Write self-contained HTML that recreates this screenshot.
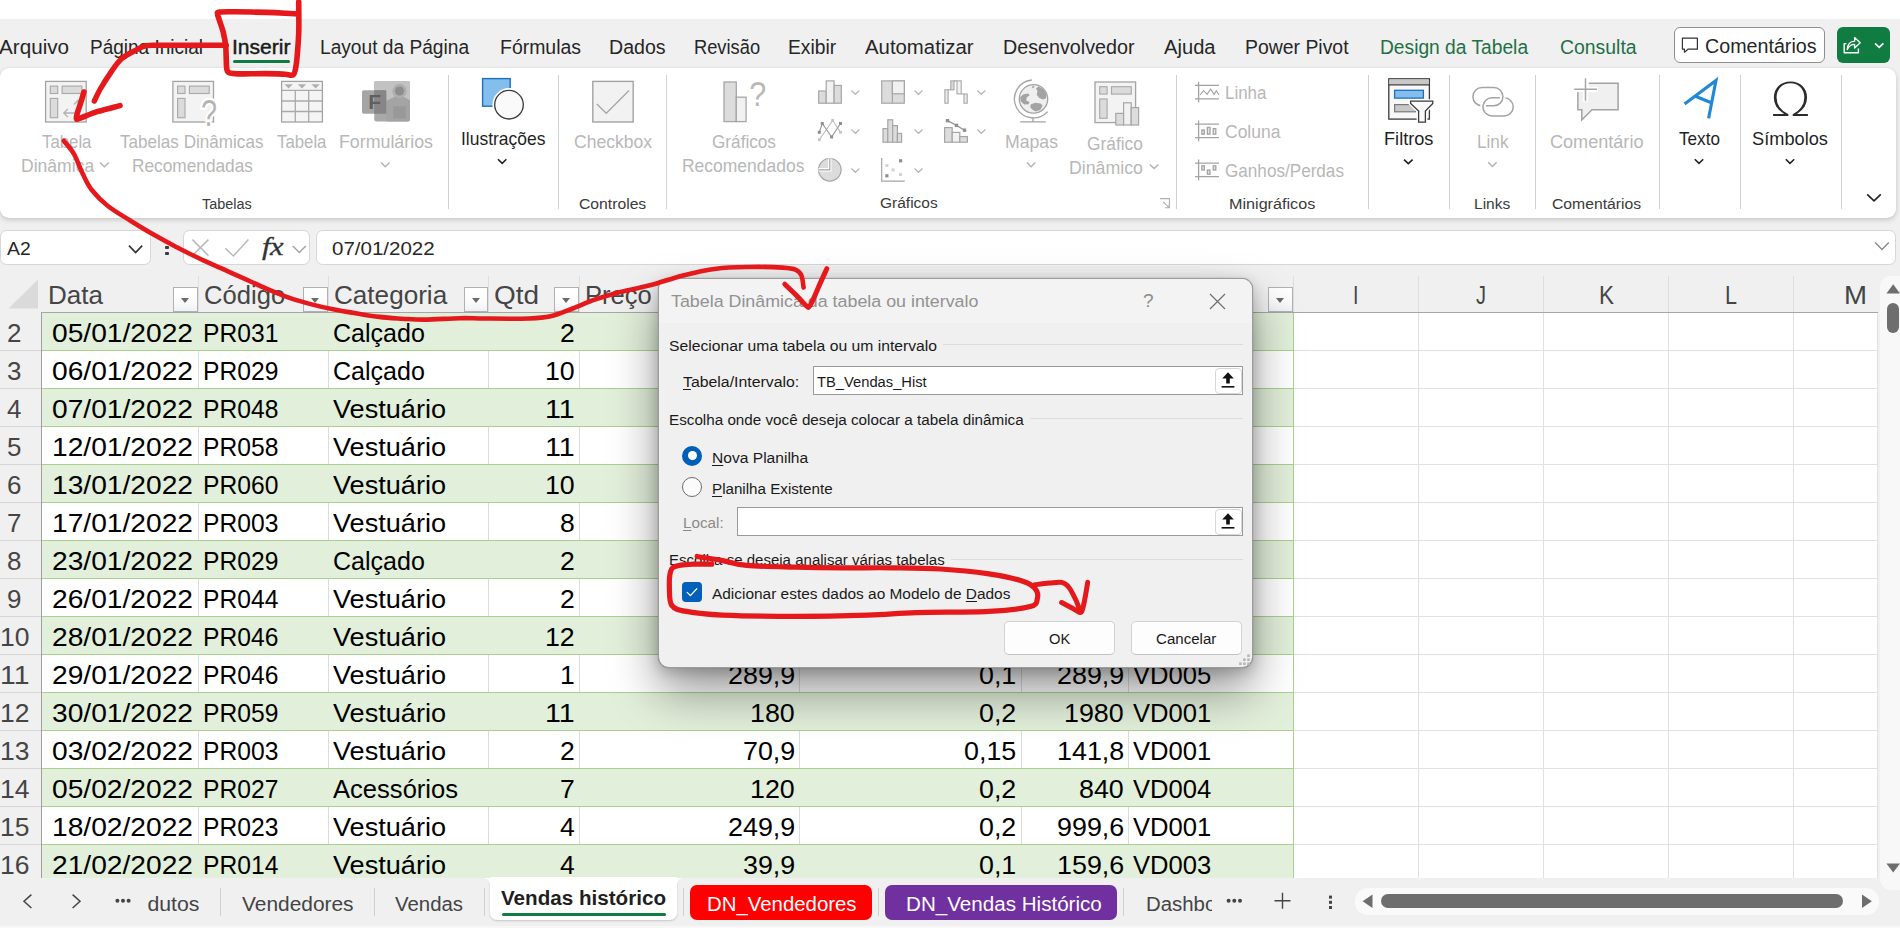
<!DOCTYPE html>
<html lang="pt-BR">
<head>
<meta charset="utf-8">
<title>Excel - Tabela Dinâmica da tabela ou intervalo</title>
<style>
html,body{margin:0;padding:0;}
body{width:1900px;height:928px;overflow:hidden;background:#f0f0f0;font-family:"Liberation Sans",sans-serif;position:relative;}
#app{position:absolute;left:0;top:0;width:1900px;height:928px;overflow:hidden;background:#f0f0f0;}
.a{position:absolute;}
.t{position:absolute;white-space:pre;transform-origin:0 0;font-family:"Liberation Sans",sans-serif;}
.t u{text-decoration-thickness:1px;text-underline-offset:2px;}
.sep{position:absolute;width:1px;background:#d2d2d2;top:75px;height:134px;}
.fbox{position:absolute;background:#fff;border:1px solid #d6d6d6;border-radius:6.5px;box-sizing:border-box;}
.fbtn{position:absolute;width:24.5px;height:24.5px;box-sizing:border-box;border:1px solid #b1b1b1;background:linear-gradient(#fff,#fbfbfb 60%,#eef1f6);top:287px;}
.fbtn:after{content:"";position:absolute;left:7px;top:9.5px;border-left:4.5px solid transparent;border-right:4.5px solid transparent;border-top:5px solid #6a6a6a;}
.tsep{position:absolute;width:1px;background:#d0d0d0;top:888px;height:28px;}
.inp{position:absolute;background:#fff;border:1px solid #9a9a9a;box-sizing:border-box;}
.ibtn{position:absolute;background:#fff;border:1px solid #d6d6d6;border-radius:4px;box-sizing:border-box;}
.dline{position:absolute;height:1px;background:#dcdcdc;}
.btn{position:absolute;background:#fdfdfd;border:1px solid #d2d2d2;border-bottom-color:#c2c2c2;border-radius:5px;box-sizing:border-box;}
</style>
</head>
<body>
<div id="app">
<!-- title strip -->
<div class="a" style="left:0;top:0;width:1900px;height:19px;background:#fff"></div>
<!-- ribbon panel -->
<div class="a" style="left:0;top:68px;width:1896px;height:150px;background:#fff;border-radius:9px;box-shadow:0 2px 5px rgba(0,0,0,.17),0 0 1px rgba(0,0,0,.12)"></div>
<!-- Inserir underline -->
<div class="a" style="left:233px;top:60px;width:57px;height:3px;background:#107c41;border-radius:1.5px"></div>
<!-- Comentarios button -->
<div class="a" style="left:1674px;top:27px;width:151px;height:36px;background:#fff;border:1px solid #8f8f8f;border-radius:6px;box-sizing:border-box"></div>
<!-- share button -->
<div class="a" style="left:1837px;top:27px;width:53px;height:36px;background:#107c41;border-radius:6px"></div>
<!-- ribbon separators -->
<div class="sep" style="left:448px"></div>
<div class="sep" style="left:558px"></div>
<div class="sep" style="left:666px"></div>
<div class="sep" style="left:1176px"></div>
<div class="sep" style="left:1368.2px"></div>
<div class="sep" style="left:1449px"></div>
<div class="sep" style="left:1535px"></div>
<div class="sep" style="left:1659px"></div>
<div class="sep" style="left:1740px"></div>
<div class="sep" style="left:1841px"></div>

<!-- formula bar -->
<div class="fbox" style="left:0.3px;top:230px;width:151px;height:34.6px"></div>
<div class="fbox" style="left:182.5px;top:230px;width:127px;height:34.6px"></div>
<div class="fbox" style="left:316px;top:230px;width:1580px;height:34.6px"></div>
<div class="a" style="left:165.4px;top:246px;width:3.4px;height:3.4px;background:#3a3a3a;border-radius:1px"></div>
<div class="a" style="left:165.4px;top:252px;width:3.4px;height:3.4px;background:#3a3a3a;border-radius:1px"></div>

<div class="a" style="left:41.5px;top:312px;width:1836px;height:566px;background:#fff"></div>
<div class="a" style="left:42px;top:312px;width:1251.5px;height:38px;background:#e2efda"></div>
<div class="a" style="left:42px;top:388px;width:1251.5px;height:38px;background:#e2efda"></div>
<div class="a" style="left:42px;top:464px;width:1251.5px;height:38px;background:#e2efda"></div>
<div class="a" style="left:42px;top:540px;width:1251.5px;height:38px;background:#e2efda"></div>
<div class="a" style="left:42px;top:616px;width:1251.5px;height:38px;background:#e2efda"></div>
<div class="a" style="left:42px;top:692px;width:1251.5px;height:38px;background:#e2efda"></div>
<div class="a" style="left:42px;top:768px;width:1251.5px;height:38px;background:#e2efda"></div>
<div class="a" style="left:42px;top:844px;width:1251.5px;height:38px;background:#e2efda"></div>
<div class="a" style="left:1294px;top:349.5px;width:583.5px;height:1px;background:#e1e1e1"></div>
<div class="a" style="left:1294px;top:387.5px;width:583.5px;height:1px;background:#e1e1e1"></div>
<div class="a" style="left:1294px;top:425.5px;width:583.5px;height:1px;background:#e1e1e1"></div>
<div class="a" style="left:1294px;top:463.5px;width:583.5px;height:1px;background:#e1e1e1"></div>
<div class="a" style="left:1294px;top:501.5px;width:583.5px;height:1px;background:#e1e1e1"></div>
<div class="a" style="left:1294px;top:539.5px;width:583.5px;height:1px;background:#e1e1e1"></div>
<div class="a" style="left:1294px;top:577.5px;width:583.5px;height:1px;background:#e1e1e1"></div>
<div class="a" style="left:1294px;top:615.5px;width:583.5px;height:1px;background:#e1e1e1"></div>
<div class="a" style="left:1294px;top:653.5px;width:583.5px;height:1px;background:#e1e1e1"></div>
<div class="a" style="left:1294px;top:691.5px;width:583.5px;height:1px;background:#e1e1e1"></div>
<div class="a" style="left:1294px;top:729.5px;width:583.5px;height:1px;background:#e1e1e1"></div>
<div class="a" style="left:1294px;top:767.5px;width:583.5px;height:1px;background:#e1e1e1"></div>
<div class="a" style="left:1294px;top:805.5px;width:583.5px;height:1px;background:#e1e1e1"></div>
<div class="a" style="left:1294px;top:843.5px;width:583.5px;height:1px;background:#e1e1e1"></div>
<div class="a" style="left:1417.5px;top:312px;width:1px;height:566px;background:#e1e1e1"></div>
<div class="a" style="left:1542.5px;top:312px;width:1px;height:566px;background:#e1e1e1"></div>
<div class="a" style="left:1667.5px;top:312px;width:1px;height:566px;background:#e1e1e1"></div>
<div class="a" style="left:1792.5px;top:312px;width:1px;height:566px;background:#e1e1e1"></div>
<div class="a" style="left:1877px;top:312px;width:1px;height:566px;background:#e1e1e1"></div>
<div class="a" style="left:197.5px;top:350px;width:1px;height:38px;background:#dcdcdc"></div>
<div class="a" style="left:328.0px;top:350px;width:1px;height:38px;background:#dcdcdc"></div>
<div class="a" style="left:487.5px;top:350px;width:1px;height:38px;background:#dcdcdc"></div>
<div class="a" style="left:579.0px;top:350px;width:1px;height:38px;background:#dcdcdc"></div>
<div class="a" style="left:799.0px;top:350px;width:1px;height:38px;background:#dcdcdc"></div>
<div class="a" style="left:1020.5px;top:350px;width:1px;height:38px;background:#dcdcdc"></div>
<div class="a" style="left:1127.5px;top:350px;width:1px;height:38px;background:#dcdcdc"></div>
<div class="a" style="left:197.5px;top:426px;width:1px;height:38px;background:#dcdcdc"></div>
<div class="a" style="left:328.0px;top:426px;width:1px;height:38px;background:#dcdcdc"></div>
<div class="a" style="left:487.5px;top:426px;width:1px;height:38px;background:#dcdcdc"></div>
<div class="a" style="left:579.0px;top:426px;width:1px;height:38px;background:#dcdcdc"></div>
<div class="a" style="left:799.0px;top:426px;width:1px;height:38px;background:#dcdcdc"></div>
<div class="a" style="left:1020.5px;top:426px;width:1px;height:38px;background:#dcdcdc"></div>
<div class="a" style="left:1127.5px;top:426px;width:1px;height:38px;background:#dcdcdc"></div>
<div class="a" style="left:197.5px;top:502px;width:1px;height:38px;background:#dcdcdc"></div>
<div class="a" style="left:328.0px;top:502px;width:1px;height:38px;background:#dcdcdc"></div>
<div class="a" style="left:487.5px;top:502px;width:1px;height:38px;background:#dcdcdc"></div>
<div class="a" style="left:579.0px;top:502px;width:1px;height:38px;background:#dcdcdc"></div>
<div class="a" style="left:799.0px;top:502px;width:1px;height:38px;background:#dcdcdc"></div>
<div class="a" style="left:1020.5px;top:502px;width:1px;height:38px;background:#dcdcdc"></div>
<div class="a" style="left:1127.5px;top:502px;width:1px;height:38px;background:#dcdcdc"></div>
<div class="a" style="left:197.5px;top:578px;width:1px;height:38px;background:#dcdcdc"></div>
<div class="a" style="left:328.0px;top:578px;width:1px;height:38px;background:#dcdcdc"></div>
<div class="a" style="left:487.5px;top:578px;width:1px;height:38px;background:#dcdcdc"></div>
<div class="a" style="left:579.0px;top:578px;width:1px;height:38px;background:#dcdcdc"></div>
<div class="a" style="left:799.0px;top:578px;width:1px;height:38px;background:#dcdcdc"></div>
<div class="a" style="left:1020.5px;top:578px;width:1px;height:38px;background:#dcdcdc"></div>
<div class="a" style="left:1127.5px;top:578px;width:1px;height:38px;background:#dcdcdc"></div>
<div class="a" style="left:197.5px;top:654px;width:1px;height:38px;background:#dcdcdc"></div>
<div class="a" style="left:328.0px;top:654px;width:1px;height:38px;background:#dcdcdc"></div>
<div class="a" style="left:487.5px;top:654px;width:1px;height:38px;background:#dcdcdc"></div>
<div class="a" style="left:579.0px;top:654px;width:1px;height:38px;background:#dcdcdc"></div>
<div class="a" style="left:799.0px;top:654px;width:1px;height:38px;background:#dcdcdc"></div>
<div class="a" style="left:1020.5px;top:654px;width:1px;height:38px;background:#dcdcdc"></div>
<div class="a" style="left:1127.5px;top:654px;width:1px;height:38px;background:#dcdcdc"></div>
<div class="a" style="left:197.5px;top:730px;width:1px;height:38px;background:#dcdcdc"></div>
<div class="a" style="left:328.0px;top:730px;width:1px;height:38px;background:#dcdcdc"></div>
<div class="a" style="left:487.5px;top:730px;width:1px;height:38px;background:#dcdcdc"></div>
<div class="a" style="left:579.0px;top:730px;width:1px;height:38px;background:#dcdcdc"></div>
<div class="a" style="left:799.0px;top:730px;width:1px;height:38px;background:#dcdcdc"></div>
<div class="a" style="left:1020.5px;top:730px;width:1px;height:38px;background:#dcdcdc"></div>
<div class="a" style="left:1127.5px;top:730px;width:1px;height:38px;background:#dcdcdc"></div>
<div class="a" style="left:197.5px;top:806px;width:1px;height:38px;background:#dcdcdc"></div>
<div class="a" style="left:328.0px;top:806px;width:1px;height:38px;background:#dcdcdc"></div>
<div class="a" style="left:487.5px;top:806px;width:1px;height:38px;background:#dcdcdc"></div>
<div class="a" style="left:579.0px;top:806px;width:1px;height:38px;background:#dcdcdc"></div>
<div class="a" style="left:799.0px;top:806px;width:1px;height:38px;background:#dcdcdc"></div>
<div class="a" style="left:1020.5px;top:806px;width:1px;height:38px;background:#dcdcdc"></div>
<div class="a" style="left:1127.5px;top:806px;width:1px;height:38px;background:#dcdcdc"></div>
<div class="a" style="left:42px;top:349.5px;width:1252px;height:1px;background:#a9d08e"></div>
<div class="a" style="left:42px;top:387.5px;width:1252px;height:1px;background:#a9d08e"></div>
<div class="a" style="left:42px;top:425.5px;width:1252px;height:1px;background:#a9d08e"></div>
<div class="a" style="left:42px;top:463.5px;width:1252px;height:1px;background:#a9d08e"></div>
<div class="a" style="left:42px;top:501.5px;width:1252px;height:1px;background:#a9d08e"></div>
<div class="a" style="left:42px;top:539.5px;width:1252px;height:1px;background:#a9d08e"></div>
<div class="a" style="left:42px;top:577.5px;width:1252px;height:1px;background:#a9d08e"></div>
<div class="a" style="left:42px;top:615.5px;width:1252px;height:1px;background:#a9d08e"></div>
<div class="a" style="left:42px;top:653.5px;width:1252px;height:1px;background:#a9d08e"></div>
<div class="a" style="left:42px;top:691.5px;width:1252px;height:1px;background:#a9d08e"></div>
<div class="a" style="left:42px;top:729.5px;width:1252px;height:1px;background:#a9d08e"></div>
<div class="a" style="left:42px;top:767.5px;width:1252px;height:1px;background:#a9d08e"></div>
<div class="a" style="left:42px;top:805.5px;width:1252px;height:1px;background:#a9d08e"></div>
<div class="a" style="left:42px;top:843.5px;width:1252px;height:1px;background:#a9d08e"></div>
<div class="a" style="left:1293px;top:312px;width:1px;height:566px;background:#a9d08e"></div>
<div class="a" style="left:0;top:312px;width:41px;height:566px;background:#f0f0f0"></div>
<div class="a" style="left:0;top:349.5px;width:41px;height:1px;background:#d6d6d6"></div>
<div class="a" style="left:0;top:387.5px;width:41px;height:1px;background:#d6d6d6"></div>
<div class="a" style="left:0;top:425.5px;width:41px;height:1px;background:#d6d6d6"></div>
<div class="a" style="left:0;top:463.5px;width:41px;height:1px;background:#d6d6d6"></div>
<div class="a" style="left:0;top:501.5px;width:41px;height:1px;background:#d6d6d6"></div>
<div class="a" style="left:0;top:539.5px;width:41px;height:1px;background:#d6d6d6"></div>
<div class="a" style="left:0;top:577.5px;width:41px;height:1px;background:#d6d6d6"></div>
<div class="a" style="left:0;top:615.5px;width:41px;height:1px;background:#d6d6d6"></div>
<div class="a" style="left:0;top:653.5px;width:41px;height:1px;background:#d6d6d6"></div>
<div class="a" style="left:0;top:691.5px;width:41px;height:1px;background:#d6d6d6"></div>
<div class="a" style="left:0;top:729.5px;width:41px;height:1px;background:#d6d6d6"></div>
<div class="a" style="left:0;top:767.5px;width:41px;height:1px;background:#d6d6d6"></div>
<div class="a" style="left:0;top:805.5px;width:41px;height:1px;background:#d6d6d6"></div>
<div class="a" style="left:0;top:843.5px;width:41px;height:1px;background:#d6d6d6"></div>
<div class="a" style="left:41px;top:312px;width:1px;height:566px;background:#9f9f9f"></div>
<div class="a" style="left:197.5px;top:276px;width:1px;height:36px;background:#dedede"></div>
<div class="a" style="left:328.0px;top:276px;width:1px;height:36px;background:#dedede"></div>
<div class="a" style="left:487.5px;top:276px;width:1px;height:36px;background:#dedede"></div>
<div class="a" style="left:579.0px;top:276px;width:1px;height:36px;background:#dedede"></div>
<div class="a" style="left:1292.5px;top:276px;width:1px;height:36px;background:#dedede"></div>
<div class="a" style="left:1417.5px;top:276px;width:1px;height:36px;background:#dedede"></div>
<div class="a" style="left:1542.5px;top:276px;width:1px;height:36px;background:#dedede"></div>
<div class="a" style="left:1667.5px;top:276px;width:1px;height:36px;background:#dedede"></div>
<div class="a" style="left:1792.5px;top:276px;width:1px;height:36px;background:#dedede"></div>
<div class="a" style="left:41px;top:311.5px;width:1836.5px;height:1px;background:#a6a6a6"></div>
<svg class="a" style="left:8px;top:279px" width="31" height="30"><path d="M30 0.5V29.5H0.5Z" fill="#dadada"/></svg>
<div class="fbtn" style="left:173.3px"></div>
<div class="fbtn" style="left:303.3px"></div>
<div class="fbtn" style="left:463.5px"></div>
<div class="fbtn" style="left:554.4px"></div>
<div class="fbtn" style="left:1268.3px"></div>
<span class="t" style="left:47.50px;top:283.14px;font-size:25.0px;line-height:25.0px;color:#454545;transform:scaleX(1.0414);">Data</span>
<span class="t" style="left:203.80px;top:283.14px;font-size:25.0px;line-height:25.0px;color:#454545;transform:scaleX(1.0248);">Código</span>
<span class="t" style="left:333.60px;top:283.14px;font-size:25.0px;line-height:25.0px;color:#454545;transform:scaleX(1.0442);">Categoria</span>
<span class="t" style="left:493.50px;top:283.14px;font-size:25.0px;line-height:25.0px;color:#454545;transform:scaleX(1.1167);">Qtd</span>
<span class="t" style="left:585.30px;top:283.14px;font-size:25.0px;line-height:25.0px;color:#454545;transform:scaleX(1.0212);">Preço</span>
<span class="t" style="left:1353.25px;top:282.74px;font-size:25.0px;line-height:25.0px;color:#454545;transform:scaleX(0.7910);">I</span>
<span class="t" style="left:1475.70px;top:282.74px;font-size:25.0px;line-height:25.0px;color:#454545;transform:scaleX(0.8000);">J</span>
<span class="t" style="left:1598.90px;top:282.74px;font-size:25.0px;line-height:25.0px;color:#454545;transform:scaleX(0.8989);">K</span>
<span class="t" style="left:1724.80px;top:282.74px;font-size:25.0px;line-height:25.0px;color:#454545;transform:scaleX(0.8629);">L</span>
<span class="t" style="left:1844.00px;top:282.74px;font-size:25.0px;line-height:25.0px;color:#454545;transform:scaleX(1.1043);">M</span>
<span class="t" style="left:7.08px;top:320.83px;font-size:25.6px;line-height:25.6px;color:#454545;transform:scaleX(1.0150);">2</span>
<span class="t" style="left:52.28px;top:320.83px;font-size:25.6px;line-height:25.6px;color:#000;transform:scaleX(1.1004);">05/01/2022</span>
<span class="t" style="left:202.98px;top:320.83px;font-size:25.6px;line-height:25.6px;color:#000;transform:scaleX(0.9627);">PR031</span>
<span class="t" style="left:332.98px;top:320.83px;font-size:25.6px;line-height:25.6px;color:#000;transform:scaleX(0.9781);">Calçado</span>
<span class="t" style="left:560.48px;top:320.83px;font-size:25.6px;line-height:25.6px;color:#000;transform:scaleX(1.0361);">2</span>
<span class="t" style="left:7.08px;top:358.83px;font-size:25.6px;line-height:25.6px;color:#454545;transform:scaleX(1.0150);">3</span>
<span class="t" style="left:52.28px;top:358.83px;font-size:25.6px;line-height:25.6px;color:#000;transform:scaleX(1.1004);">06/01/2022</span>
<span class="t" style="left:202.98px;top:358.83px;font-size:25.6px;line-height:25.6px;color:#000;transform:scaleX(0.9627);">PR029</span>
<span class="t" style="left:332.98px;top:358.83px;font-size:25.6px;line-height:25.6px;color:#000;transform:scaleX(0.9781);">Calçado</span>
<span class="t" style="left:545.48px;top:358.83px;font-size:25.6px;line-height:25.6px;color:#000;transform:scaleX(1.0449);">10</span>
<span class="t" style="left:7.08px;top:396.83px;font-size:25.6px;line-height:25.6px;color:#454545;transform:scaleX(1.0150);">4</span>
<span class="t" style="left:52.28px;top:396.83px;font-size:25.6px;line-height:25.6px;color:#000;transform:scaleX(1.1004);">07/01/2022</span>
<span class="t" style="left:202.98px;top:396.83px;font-size:25.6px;line-height:25.6px;color:#000;transform:scaleX(0.9627);">PR048</span>
<span class="t" style="left:332.98px;top:396.83px;font-size:25.6px;line-height:25.6px;color:#000;transform:scaleX(1.0593);">Vestuário</span>
<span class="t" style="left:545.48px;top:396.83px;font-size:25.6px;line-height:25.6px;color:#000;transform:scaleX(1.1193);">11</span>
<span class="t" style="left:7.08px;top:434.83px;font-size:25.6px;line-height:25.6px;color:#454545;transform:scaleX(1.0150);">5</span>
<span class="t" style="left:52.28px;top:434.83px;font-size:25.6px;line-height:25.6px;color:#000;transform:scaleX(1.1004);">12/01/2022</span>
<span class="t" style="left:202.98px;top:434.83px;font-size:25.6px;line-height:25.6px;color:#000;transform:scaleX(0.9627);">PR058</span>
<span class="t" style="left:332.98px;top:434.83px;font-size:25.6px;line-height:25.6px;color:#000;transform:scaleX(1.0593);">Vestuário</span>
<span class="t" style="left:545.48px;top:434.83px;font-size:25.6px;line-height:25.6px;color:#000;transform:scaleX(1.1193);">11</span>
<span class="t" style="left:7.08px;top:472.83px;font-size:25.6px;line-height:25.6px;color:#454545;transform:scaleX(1.0150);">6</span>
<span class="t" style="left:52.28px;top:472.83px;font-size:25.6px;line-height:25.6px;color:#000;transform:scaleX(1.1004);">13/01/2022</span>
<span class="t" style="left:202.98px;top:472.83px;font-size:25.6px;line-height:25.6px;color:#000;transform:scaleX(0.9627);">PR060</span>
<span class="t" style="left:332.98px;top:472.83px;font-size:25.6px;line-height:25.6px;color:#000;transform:scaleX(1.0593);">Vestuário</span>
<span class="t" style="left:545.48px;top:472.83px;font-size:25.6px;line-height:25.6px;color:#000;transform:scaleX(1.0449);">10</span>
<span class="t" style="left:7.08px;top:510.83px;font-size:25.6px;line-height:25.6px;color:#454545;transform:scaleX(1.0150);">7</span>
<span class="t" style="left:52.28px;top:510.83px;font-size:25.6px;line-height:25.6px;color:#000;transform:scaleX(1.1004);">17/01/2022</span>
<span class="t" style="left:202.98px;top:510.83px;font-size:25.6px;line-height:25.6px;color:#000;transform:scaleX(0.9627);">PR003</span>
<span class="t" style="left:332.98px;top:510.83px;font-size:25.6px;line-height:25.6px;color:#000;transform:scaleX(1.0593);">Vestuário</span>
<span class="t" style="left:560.48px;top:510.83px;font-size:25.6px;line-height:25.6px;color:#000;transform:scaleX(1.0361);">8</span>
<span class="t" style="left:7.08px;top:548.83px;font-size:25.6px;line-height:25.6px;color:#454545;transform:scaleX(1.0150);">8</span>
<span class="t" style="left:52.28px;top:548.83px;font-size:25.6px;line-height:25.6px;color:#000;transform:scaleX(1.1004);">23/01/2022</span>
<span class="t" style="left:202.98px;top:548.83px;font-size:25.6px;line-height:25.6px;color:#000;transform:scaleX(0.9627);">PR029</span>
<span class="t" style="left:332.98px;top:548.83px;font-size:25.6px;line-height:25.6px;color:#000;transform:scaleX(0.9781);">Calçado</span>
<span class="t" style="left:560.48px;top:548.83px;font-size:25.6px;line-height:25.6px;color:#000;transform:scaleX(1.0361);">2</span>
<span class="t" style="left:7.08px;top:586.83px;font-size:25.6px;line-height:25.6px;color:#454545;transform:scaleX(1.0150);">9</span>
<span class="t" style="left:52.28px;top:586.83px;font-size:25.6px;line-height:25.6px;color:#000;transform:scaleX(1.1004);">26/01/2022</span>
<span class="t" style="left:202.98px;top:586.83px;font-size:25.6px;line-height:25.6px;color:#000;transform:scaleX(0.9627);">PR044</span>
<span class="t" style="left:332.98px;top:586.83px;font-size:25.6px;line-height:25.6px;color:#000;transform:scaleX(1.0593);">Vestuário</span>
<span class="t" style="left:560.48px;top:586.83px;font-size:25.6px;line-height:25.6px;color:#000;transform:scaleX(1.0361);">2</span>
<span class="t" style="left:-0.42px;top:624.83px;font-size:25.6px;line-height:25.6px;color:#454545;transform:scaleX(1.0344);">10</span>
<span class="t" style="left:52.28px;top:624.83px;font-size:25.6px;line-height:25.6px;color:#000;transform:scaleX(1.1004);">28/01/2022</span>
<span class="t" style="left:202.98px;top:624.83px;font-size:25.6px;line-height:25.6px;color:#000;transform:scaleX(0.9627);">PR046</span>
<span class="t" style="left:332.98px;top:624.83px;font-size:25.6px;line-height:25.6px;color:#000;transform:scaleX(1.0593);">Vestuário</span>
<span class="t" style="left:545.48px;top:624.83px;font-size:25.6px;line-height:25.6px;color:#000;transform:scaleX(1.0449);">12</span>
<span class="t" style="left:-0.42px;top:662.83px;font-size:25.6px;line-height:25.6px;color:#454545;transform:scaleX(1.1080);">11</span>
<span class="t" style="left:52.28px;top:662.83px;font-size:25.6px;line-height:25.6px;color:#000;transform:scaleX(1.1004);">29/01/2022</span>
<span class="t" style="left:202.98px;top:662.83px;font-size:25.6px;line-height:25.6px;color:#000;transform:scaleX(0.9627);">PR046</span>
<span class="t" style="left:332.98px;top:662.83px;font-size:25.6px;line-height:25.6px;color:#000;transform:scaleX(1.0593);">Vestuário</span>
<span class="t" style="left:560.48px;top:662.83px;font-size:25.6px;line-height:25.6px;color:#000;transform:scaleX(1.0361);">1</span>
<span class="t" style="left:727.68px;top:662.83px;font-size:25.6px;line-height:25.6px;color:#000;transform:scaleX(1.0500);">289,9</span>
<span class="t" style="left:979.38px;top:662.83px;font-size:25.6px;line-height:25.6px;color:#000;transform:scaleX(1.0465);">0,1</span>
<span class="t" style="left:1056.78px;top:662.83px;font-size:25.6px;line-height:25.6px;color:#000;transform:scaleX(1.0500);">289,9</span>
<span class="t" style="left:1132.73px;top:662.83px;font-size:25.6px;line-height:25.6px;color:#000;transform:scaleX(1.0004);">VD005</span>
<span class="t" style="left:-0.42px;top:700.83px;font-size:25.6px;line-height:25.6px;color:#454545;transform:scaleX(1.0344);">12</span>
<span class="t" style="left:52.28px;top:700.83px;font-size:25.6px;line-height:25.6px;color:#000;transform:scaleX(1.1004);">30/01/2022</span>
<span class="t" style="left:202.98px;top:700.83px;font-size:25.6px;line-height:25.6px;color:#000;transform:scaleX(0.9627);">PR059</span>
<span class="t" style="left:332.98px;top:700.83px;font-size:25.6px;line-height:25.6px;color:#000;transform:scaleX(1.0593);">Vestuário</span>
<span class="t" style="left:545.48px;top:700.83px;font-size:25.6px;line-height:25.6px;color:#000;transform:scaleX(1.1193);">11</span>
<span class="t" style="left:750.18px;top:700.83px;font-size:25.6px;line-height:25.6px;color:#000;transform:scaleX(1.0479);">180</span>
<span class="t" style="left:979.38px;top:700.83px;font-size:25.6px;line-height:25.6px;color:#000;transform:scaleX(1.0465);">0,2</span>
<span class="t" style="left:1064.28px;top:700.83px;font-size:25.6px;line-height:25.6px;color:#000;transform:scaleX(1.0494);">1980</span>
<span class="t" style="left:1132.73px;top:700.83px;font-size:25.6px;line-height:25.6px;color:#000;transform:scaleX(1.0004);">VD001</span>
<span class="t" style="left:-0.42px;top:738.83px;font-size:25.6px;line-height:25.6px;color:#454545;transform:scaleX(1.0344);">13</span>
<span class="t" style="left:52.28px;top:738.83px;font-size:25.6px;line-height:25.6px;color:#000;transform:scaleX(1.1004);">03/02/2022</span>
<span class="t" style="left:202.98px;top:738.83px;font-size:25.6px;line-height:25.6px;color:#000;transform:scaleX(0.9627);">PR003</span>
<span class="t" style="left:332.98px;top:738.83px;font-size:25.6px;line-height:25.6px;color:#000;transform:scaleX(1.0593);">Vestuário</span>
<span class="t" style="left:560.48px;top:738.83px;font-size:25.6px;line-height:25.6px;color:#000;transform:scaleX(1.0361);">2</span>
<span class="t" style="left:742.68px;top:738.83px;font-size:25.6px;line-height:25.6px;color:#000;transform:scaleX(1.0486);">70,9</span>
<span class="t" style="left:964.38px;top:738.83px;font-size:25.6px;line-height:25.6px;color:#000;transform:scaleX(1.0486);">0,15</span>
<span class="t" style="left:1056.78px;top:738.83px;font-size:25.6px;line-height:25.6px;color:#000;transform:scaleX(1.0500);">141,8</span>
<span class="t" style="left:1132.73px;top:738.83px;font-size:25.6px;line-height:25.6px;color:#000;transform:scaleX(1.0004);">VD001</span>
<span class="t" style="left:-0.42px;top:776.83px;font-size:25.6px;line-height:25.6px;color:#454545;transform:scaleX(1.0344);">14</span>
<span class="t" style="left:52.28px;top:776.83px;font-size:25.6px;line-height:25.6px;color:#000;transform:scaleX(1.1004);">05/02/2022</span>
<span class="t" style="left:202.98px;top:776.83px;font-size:25.6px;line-height:25.6px;color:#000;transform:scaleX(0.9627);">PR027</span>
<span class="t" style="left:332.98px;top:776.83px;font-size:25.6px;line-height:25.6px;color:#000;transform:scaleX(0.9990);">Acessórios</span>
<span class="t" style="left:560.48px;top:776.83px;font-size:25.6px;line-height:25.6px;color:#000;transform:scaleX(1.0361);">7</span>
<span class="t" style="left:750.18px;top:776.83px;font-size:25.6px;line-height:25.6px;color:#000;transform:scaleX(1.0479);">120</span>
<span class="t" style="left:979.38px;top:776.83px;font-size:25.6px;line-height:25.6px;color:#000;transform:scaleX(1.0465);">0,2</span>
<span class="t" style="left:1079.28px;top:776.83px;font-size:25.6px;line-height:25.6px;color:#000;transform:scaleX(1.0479);">840</span>
<span class="t" style="left:1132.73px;top:776.83px;font-size:25.6px;line-height:25.6px;color:#000;transform:scaleX(1.0004);">VD004</span>
<span class="t" style="left:-0.42px;top:814.83px;font-size:25.6px;line-height:25.6px;color:#454545;transform:scaleX(1.0344);">15</span>
<span class="t" style="left:52.28px;top:814.83px;font-size:25.6px;line-height:25.6px;color:#000;transform:scaleX(1.1004);">18/02/2022</span>
<span class="t" style="left:202.98px;top:814.83px;font-size:25.6px;line-height:25.6px;color:#000;transform:scaleX(0.9627);">PR023</span>
<span class="t" style="left:332.98px;top:814.83px;font-size:25.6px;line-height:25.6px;color:#000;transform:scaleX(1.0593);">Vestuário</span>
<span class="t" style="left:560.48px;top:814.83px;font-size:25.6px;line-height:25.6px;color:#000;transform:scaleX(1.0361);">4</span>
<span class="t" style="left:727.68px;top:814.83px;font-size:25.6px;line-height:25.6px;color:#000;transform:scaleX(1.0500);">249,9</span>
<span class="t" style="left:979.38px;top:814.83px;font-size:25.6px;line-height:25.6px;color:#000;transform:scaleX(1.0465);">0,2</span>
<span class="t" style="left:1056.78px;top:814.83px;font-size:25.6px;line-height:25.6px;color:#000;transform:scaleX(1.0500);">999,6</span>
<span class="t" style="left:1132.73px;top:814.83px;font-size:25.6px;line-height:25.6px;color:#000;transform:scaleX(1.0004);">VD001</span>
<span class="t" style="left:-0.42px;top:852.83px;font-size:25.6px;line-height:25.6px;color:#454545;transform:scaleX(1.0344);">16</span>
<span class="t" style="left:52.28px;top:852.83px;font-size:25.6px;line-height:25.6px;color:#000;transform:scaleX(1.1004);">21/02/2022</span>
<span class="t" style="left:202.98px;top:852.83px;font-size:25.6px;line-height:25.6px;color:#000;transform:scaleX(0.9627);">PR014</span>
<span class="t" style="left:332.98px;top:852.83px;font-size:25.6px;line-height:25.6px;color:#000;transform:scaleX(1.0593);">Vestuário</span>
<span class="t" style="left:560.48px;top:852.83px;font-size:25.6px;line-height:25.6px;color:#000;transform:scaleX(1.0361);">4</span>
<span class="t" style="left:742.68px;top:852.83px;font-size:25.6px;line-height:25.6px;color:#000;transform:scaleX(1.0486);">39,9</span>
<span class="t" style="left:979.38px;top:852.83px;font-size:25.6px;line-height:25.6px;color:#000;transform:scaleX(1.0465);">0,1</span>
<span class="t" style="left:1056.78px;top:852.83px;font-size:25.6px;line-height:25.6px;color:#000;transform:scaleX(1.0500);">159,6</span>
<span class="t" style="left:1132.73px;top:852.83px;font-size:25.6px;line-height:25.6px;color:#000;transform:scaleX(1.0004);">VD003</span>

<!-- sheet tab bar -->
<div class="a" style="left:0;top:878px;width:1900px;height:50px;background:#f0f0f0"></div>
<div class="a" style="left:0;top:926px;width:1900px;height:2px;background:#f7f7f7"></div>
<div class="tsep" style="left:220px"></div>
<div class="tsep" style="left:374px"></div>
<div class="tsep" style="left:483.5px"></div>
<div class="tsep" style="left:683px"></div>
<div class="tsep" style="left:878px"></div>
<div class="tsep" style="left:1123px"></div>
<!-- active tab -->
<div class="a" style="left:489.5px;top:877px;width:187.5px;height:43px;background:#fff;border-radius:0 0 7px 7px;box-shadow:0 1px 2px rgba(0,0,0,.18)"></div>
<div class="a" style="left:483.5px;top:878px;width:6px;height:6px;background:radial-gradient(circle at 0 100%,rgba(255,255,255,0) 5.5px,#fff 6px)"></div>
<div class="a" style="left:677px;top:878px;width:6px;height:6px;background:radial-gradient(circle at 100% 100%,rgba(255,255,255,0) 5.5px,#fff 6px)"></div>
<div class="a" style="left:502px;top:912.5px;width:163.5px;height:3px;background:#107c41;border-radius:1.5px"></div>
<div class="a" style="left:690px;top:884.5px;width:182px;height:35px;background:#ff0000;border-radius:7px"></div>
<div class="a" style="left:885px;top:884.5px;width:232px;height:35px;background:#7030a0;border-radius:7px"></div>
<!-- clipped tab names -->
<div class="a" style="left:146.9px;top:885px;width:53.1px;height:34px;overflow:hidden"><span class="t" style="right:0.3px;left:auto;top:9.9px;font-size:19.6px;line-height:19.6px;color:#444;transform-origin:100% 0;transform:scaleX(1.085)">Produtos</span></div>
<div class="a" style="left:1140px;top:885px;width:71.5px;height:34px;overflow:hidden"><span class="t" style="left:5.5px;top:9.9px;font-size:19.6px;line-height:19.6px;color:#444;transform:scaleX(1.04)">Dashboard</span></div>
<!-- h scrollbar -->
<div class="a" style="left:1355px;top:888px;width:524px;height:26.5px;background:#fafafa;border-radius:13px"></div>
<div class="a" style="left:1381px;top:894px;width:461.5px;height:13.5px;background:#6e6e6e;border-radius:7px"></div>
<!-- v scrollbar -->
<div class="a" style="left:1880px;top:275.5px;width:26px;height:614px;background:#f8f8f8;border-radius:11px 0 0 11px"></div>
<div class="a" style="left:1887.2px;top:303px;width:11.8px;height:29.6px;background:#6e6e6e;border-radius:6px"></div>

<span class="t" style="left:-1.28px;top:38.21px;font-size:19.6px;line-height:19.6px;color:#262626;transform:scaleX(1.0546);">Arquivo</span>
<span class="t" style="left:89.72px;top:38.21px;font-size:19.6px;line-height:19.6px;color:#262626;transform:scaleX(0.9700);">Página Inicial</span>
<span class="t" style="left:319.72px;top:38.21px;font-size:19.6px;line-height:19.6px;color:#262626;transform:scaleX(0.9773);">Layout da Página</span>
<span class="t" style="left:499.72px;top:38.21px;font-size:19.6px;line-height:19.6px;color:#262626;transform:scaleX(0.9926);">Fórmulas</span>
<span class="t" style="left:609.22px;top:38.21px;font-size:19.6px;line-height:19.6px;color:#262626;transform:scaleX(0.9987);">Dados</span>
<span class="t" style="left:693.72px;top:38.21px;font-size:19.6px;line-height:19.6px;color:#262626;transform:scaleX(0.9332);">Revisão</span>
<span class="t" style="left:788.22px;top:38.21px;font-size:19.6px;line-height:19.6px;color:#262626;transform:scaleX(0.9810);">Exibir</span>
<span class="t" style="left:864.72px;top:38.21px;font-size:19.6px;line-height:19.6px;color:#262626;transform:scaleX(1.0385);">Automatizar</span>
<span class="t" style="left:1002.97px;top:38.21px;font-size:19.6px;line-height:19.6px;color:#262626;transform:scaleX(1.0066);">Desenvolvedor</span>
<span class="t" style="left:1163.72px;top:38.21px;font-size:19.6px;line-height:19.6px;color:#262626;transform:scaleX(1.0288);">Ajuda</span>
<span class="t" style="left:1244.72px;top:38.21px;font-size:19.6px;line-height:19.6px;color:#262626;transform:scaleX(0.9906);">Power Pivot</span>
<span class="t" style="left:232.22px;top:38.21px;font-size:19.6px;line-height:19.6px;color:#1a1a1a;-webkit-text-stroke:0.42px #1a1a1a;transform:scaleX(1.0756);">Inserir</span>
<span class="t" style="left:1380.22px;top:38.21px;font-size:19.6px;line-height:19.6px;color:#1e7145;transform:scaleX(0.9802);">Design da Tabela</span>
<span class="t" style="left:1559.72px;top:38.21px;font-size:19.6px;line-height:19.6px;color:#1e7145;transform:scaleX(0.9900);">Consulta</span>
<span class="t" style="left:1704.72px;top:36.71px;font-size:19.6px;line-height:19.6px;color:#262626;transform:scaleX(1.0044);">Comentários</span>
<span class="t" style="left:41.77px;top:133.39px;font-size:18.2px;line-height:18.2px;color:#b7b7b7;transform:scaleX(0.9228);">Tabela</span>
<span class="t" style="left:21.27px;top:157.39px;font-size:18.2px;line-height:18.2px;color:#b7b7b7;transform:scaleX(0.9656);">Dinâmica</span>
<span class="t" style="left:120.27px;top:133.39px;font-size:18.2px;line-height:18.2px;color:#b7b7b7;transform:scaleX(0.9398);">Tabelas Dinâmicas</span>
<span class="t" style="left:131.77px;top:157.39px;font-size:18.2px;line-height:18.2px;color:#b7b7b7;transform:scaleX(0.9494);">Recomendadas</span>
<span class="t" style="left:276.77px;top:133.39px;font-size:18.2px;line-height:18.2px;color:#b7b7b7;transform:scaleX(0.9228);">Tabela</span>
<span class="t" style="left:338.77px;top:133.39px;font-size:18.2px;line-height:18.2px;color:#b7b7b7;transform:scaleX(0.9785);">Formulários</span>
<span class="t" style="left:573.77px;top:133.39px;font-size:18.2px;line-height:18.2px;color:#b7b7b7;transform:scaleX(0.9637);">Checkbox</span>
<span class="t" style="left:711.77px;top:133.39px;font-size:18.2px;line-height:18.2px;color:#b7b7b7;transform:scaleX(0.9444);">Gráficos</span>
<span class="t" style="left:682.27px;top:157.39px;font-size:18.2px;line-height:18.2px;color:#b7b7b7;transform:scaleX(0.9611);">Recomendados</span>
<span class="t" style="left:1004.77px;top:133.39px;font-size:18.2px;line-height:18.2px;color:#b7b7b7;transform:scaleX(0.9700);">Mapas</span>
<span class="t" style="left:1086.77px;top:134.89px;font-size:18.2px;line-height:18.2px;color:#b7b7b7;transform:scaleX(0.9545);">Gráfico</span>
<span class="t" style="left:1069.27px;top:158.89px;font-size:18.2px;line-height:18.2px;color:#b7b7b7;transform:scaleX(0.9755);">Dinâmico</span>
<span class="t" style="left:1224.77px;top:84.14px;font-size:18.2px;line-height:18.2px;color:#b7b7b7;transform:scaleX(0.9313);">Linha</span>
<span class="t" style="left:1224.77px;top:123.39px;font-size:18.2px;line-height:18.2px;color:#b7b7b7;transform:scaleX(0.9621);">Coluna</span>
<span class="t" style="left:1224.77px;top:161.89px;font-size:18.2px;line-height:18.2px;color:#b7b7b7;transform:scaleX(0.9412);">Ganhos/Perdas</span>
<span class="t" style="left:1476.77px;top:133.39px;font-size:18.2px;line-height:18.2px;color:#b7b7b7;transform:scaleX(0.9425);">Link</span>
<span class="t" style="left:1550.27px;top:133.39px;font-size:18.2px;line-height:18.2px;color:#b7b7b7;transform:scaleX(0.9940);">Comentário</span>
<span class="t" style="left:461.27px;top:129.89px;font-size:18.2px;line-height:18.2px;color:#1f1f1f;transform:scaleX(0.9602);">Ilustrações</span>
<span class="t" style="left:1384.27px;top:129.89px;font-size:18.2px;line-height:18.2px;color:#1f1f1f;transform:scaleX(0.9988);">Filtros</span>
<span class="t" style="left:1678.77px;top:129.89px;font-size:18.2px;line-height:18.2px;color:#1f1f1f;transform:scaleX(0.9419);">Texto</span>
<span class="t" style="left:1752.27px;top:129.89px;font-size:18.2px;line-height:18.2px;color:#1f1f1f;transform:scaleX(1.0017);">Símbolos</span>
<span class="t" style="left:201.88px;top:195.76px;font-size:15.4px;line-height:15.4px;color:#3a3a3a;transform:scaleX(0.9372);">Tabelas</span>
<span class="t" style="left:578.88px;top:195.76px;font-size:15.4px;line-height:15.4px;color:#3a3a3a;transform:scaleX(1.0206);">Controles</span>
<span class="t" style="left:880.38px;top:195.16px;font-size:15.4px;line-height:15.4px;color:#3a3a3a;transform:scaleX(1.0073);">Gráficos</span>
<span class="t" style="left:1228.88px;top:195.76px;font-size:15.4px;line-height:15.4px;color:#3a3a3a;transform:scaleX(1.0502);">Minigráficos</span>
<span class="t" style="left:1473.88px;top:195.76px;font-size:15.4px;line-height:15.4px;color:#3a3a3a;transform:scaleX(1.0082);">Links</span>
<span class="t" style="left:1552.38px;top:195.76px;font-size:15.4px;line-height:15.4px;color:#3a3a3a;transform:scaleX(1.0227);">Comentários</span>
<span class="t" style="left:7.47px;top:240.39px;font-size:18.2px;line-height:18.2px;color:#262626;transform:scaleX(1.0632);">A2</span>
<span class="t" style="left:331.77px;top:240.39px;font-size:18.2px;line-height:18.2px;color:#262626;transform:scaleX(1.1282);">07/01/2022</span>
<span class="t" style="left:241.72px;top:894.91px;font-size:19.6px;line-height:19.6px;color:#444;transform:scaleX(1.0667);">Vendedores</span>
<span class="t" style="left:394.72px;top:894.91px;font-size:19.6px;line-height:19.6px;color:#444;transform:scaleX(1.0412);">Vendas</span>
<span class="t" style="left:501.22px;top:888.71px;font-size:19.6px;line-height:19.6px;color:#1f1f1f;font-weight:700;transform:scaleX(1.0526);">Vendas histórico</span>
<span class="t" style="left:706.72px;top:894.91px;font-size:19.6px;line-height:19.6px;color:#fff;transform:scaleX(1.0401);">DN_Vendedores</span>
<span class="t" style="left:906.22px;top:894.91px;font-size:19.6px;line-height:19.6px;color:#fff;transform:scaleX(1.0515);">DN_Vendas Histórico</span>
<svg class="a" style="left:0;top:0" width="1900" height="232" viewBox="0 0 1900 232" fill="none">

<!-- Tabela Dinamica -->
<g transform="translate(45 80.8)">
 <rect x="0.6" y="0.6" width="40.6" height="40.6" fill="#f3f3f3" stroke="#a3a3a3" stroke-width="1.3"/>
 <rect x="5.3" y="5.3" width="7.4" height="7.4" fill="#dbdbdb" stroke="#aaaaaa" stroke-width="1.15"/>
 <rect x="17.1" y="5.3" width="19.8" height="7.4" fill="#dbdbdb" stroke="#aaaaaa" stroke-width="1.15"/>
 <rect x="5.3" y="17.6" width="7.4" height="19.3" fill="#dbdbdb" stroke="#aaaaaa" stroke-width="1.15"/>
</g>
<path d="M64 113H78V101M67.8 109L63.8 113L67.8 117M74 104.5L78 100.3L82 104.5" stroke="#b3b3b3" stroke-width="1.3"/>
<!-- Tabelas Dinamicas Recomendadas -->
<g transform="translate(172.3 80.8)">
 <rect x="0.6" y="0.6" width="40.6" height="40.6" fill="#f3f3f3" stroke="#a3a3a3" stroke-width="1.3"/>
 <rect x="5.3" y="5.3" width="7.4" height="7.4" fill="#dbdbdb" stroke="#aaaaaa" stroke-width="1.15"/>
 <rect x="17.1" y="5.3" width="19.8" height="7.4" fill="#dbdbdb" stroke="#aaaaaa" stroke-width="1.15"/>
 <rect x="5.3" y="17.6" width="7.4" height="19.3" fill="#dbdbdb" stroke="#aaaaaa" stroke-width="1.15"/>
</g>
<text x="201" y="125.6" font-family="Liberation Sans, sans-serif" font-size="36" fill="#b4b4b4" stroke="#fff" stroke-width="4.6" paint-order="stroke" textLength="16" lengthAdjust="spacingAndGlyphs">?</text>
<!-- Tabela -->
<rect x="281.6" y="81.4" width="40.8" height="40.6" fill="#f4f4f4" stroke="#a3a3a3" stroke-width="1.3"/>
<path d="M281.6 90.3H322.4M281.6 101H322.4M281.6 111.5H322.4M295.3 90.3V122M308.7 90.3V122" stroke="#a9a9a9" stroke-width="1.3"/>
<path d="M284.4 84.2h8.4l-4.2 4.4zM297.8 84.2h8.4l-4.2 4.4zM311.4 84.2h8.4l-4.2 4.4z" fill="#b0b0b0"/>
<!-- Formularios -->
<rect x="374.2" y="81" width="35.8" height="40.6" rx="2" fill="#a9a9a9"/>
<path d="M376.2 81h31.8a2 2 0 0 1 2 2v17.5l-11-6-24.8 13V83a2 2 0 0 1 2-2z" fill="#c2c2c2"/>
<path d="M410 100.5l-11-6-12.5 6.6V121.6h21.5a2 2 0 0 0 2-2z" fill="#a4a4a4"/>
<circle cx="399.5" cy="91" r="7.2" fill="#aeaeae"/>
<circle cx="399.5" cy="91" r="4.6" fill="#8d8d8d"/>
<rect x="393.2" y="106.3" width="12.6" height="12.1" fill="#999"/>
<rect x="362" y="90.2" width="24.3" height="23.5" rx="1.6" fill="#9d9d9d" fill-opacity=".92"/>
<rect x="374.2" y="90.2" width="12.1" height="23.5" fill="#7e7e7e" fill-opacity=".75"/>
<text x="368.3" y="109" font-family="Liberation Sans, sans-serif" font-weight="700" font-size="21" fill="#5f5f5f">F</text>
<!-- Ilustracoes -->
<rect x="482.6" y="78.6" width="27.6" height="27.6" fill="#83beec" stroke="#1e6fbf" stroke-width="1.4"/>
<circle cx="509" cy="104.7" r="16.6" fill="#fff"/>
<circle cx="509" cy="104.7" r="14.3" fill="#fafafa" stroke="#3a3a3a" stroke-width="1.3"/>
<!-- Checkbox -->
<rect x="592.8" y="81.4" width="40.4" height="40.6" fill="#f2f2f2" stroke="#a3a3a3" stroke-width="1.4"/>
<path d="M596.8 103.9L606.3 113.3L629 90.5" stroke="#a9a9a9" stroke-width="1.4"/>
<!-- Graficos Recomendados -->
<rect x="724" y="82" width="12.3" height="39.6" fill="#dcdcdc" stroke="#a6a6a6" stroke-width="1.3"/>
<rect x="736.3" y="97.2" width="9.8" height="24.4" fill="#f1f1f1" stroke="#a6a6a6" stroke-width="1.3"/>
<text x="749.2" y="106.4" font-family="Liberation Sans, sans-serif" font-size="35" fill="#b8b8b8" textLength="17" lengthAdjust="spacingAndGlyphs">?</text>
<!-- small chart icons col1 -->
<g stroke="#a6a6a6" stroke-width="1.2">
 <rect x="818.7" y="91" width="7.5" height="12.2" fill="#dcdcdc"/>
 <rect x="826.2" y="80.9" width="7.9" height="22.3" fill="#f1f1f1"/>
 <rect x="834.1" y="85.4" width="7.2" height="17.8" fill="#dcdcdc"/>
</g>
<path d="M819.3 139.8L832.7 120.4L840.5 132.3" stroke="#bcbcbc" stroke-width="1.1"/>
<path d="M819.3 132.3L822.3 123.5L831.6 137L840.5 123.5" stroke="#9a9a9a" stroke-width="1.2"/>
<g fill="#c4c4c4"><rect x="817.9" y="138.4" width="2.8" height="2.8"/><rect x="831.3" y="119" width="2.8" height="2.8"/><rect x="839.1" y="130.9" width="2.8" height="2.8"/></g>
<g fill="#8f8f8f"><rect x="817.8" y="130.8" width="3" height="3"/><rect x="820.8" y="122" width="3" height="3"/><rect x="830.1" y="135.5" width="3" height="3"/><rect x="839" y="122" width="3" height="3"/></g>
<circle cx="829.8" cy="169.8" r="11.3" fill="#dcdcdc" stroke="#a6a6a6" stroke-width="1.2"/>
<path d="M829.8 158.5V169.8H818.5" stroke="#fff" stroke-width="3.4"/>
<path d="M829.8 158.5V169.8H818.5" stroke="#a6a6a6" stroke-width="1.2"/>
<path d="M831.6 158.2A11.6 11.6 0 1 1 818.2 171.6H831.6Z" fill="#dcdcdc" stroke="#a6a6a6" stroke-width="1.2" opacity="0"/>
<!-- col2 -->
<rect x="881.7" y="80.9" width="22.6" height="22.3" fill="#dcdcdc" stroke="#a6a6a6" stroke-width="1.2"/>
<rect x="892.4" y="80.9" width="11.9" height="12.9" fill="#f1f1f1" stroke="#a6a6a6" stroke-width="1.2"/>
<path d="M892.4 80.9V103.2" stroke="#a6a6a6" stroke-width="1.2"/>
<g stroke="#a6a6a6" stroke-width="1.2" fill="#dcdcdc">
 <rect x="883" y="128.6" width="4.8" height="13.6"/>
 <rect x="887.8" y="119.8" width="4.9" height="22.4"/>
 <rect x="892.7" y="125.6" width="4.7" height="16.6"/>
 <rect x="897.4" y="133.4" width="4.2" height="8.8"/>
</g>
<path d="M881.7 158.1V181.2H904.8" stroke="#a6a6a6" stroke-width="1.2"/>
<g fill="#8f8f8f"><rect x="899" y="159.2" width="3.2" height="3.2"/><rect x="885.3" y="174.2" width="3.2" height="3.2"/></g>
<g fill="#d4d4d4"><rect x="885.4" y="164" width="3" height="3"/><rect x="891.5" y="168.4" width="3" height="3"/><rect x="899" y="173" width="3" height="3"/></g>
<!-- col3 waterfall -->
<g stroke="#a6a6a6" stroke-width="1.1">
 <rect x="944.9" y="89.8" width="3.2" height="13.4" fill="#ececec"/>
 <rect x="950.8" y="80.9" width="3.2" height="8.9" fill="#dcdcdc"/>
 <rect x="957" y="80.9" width="4.2" height="13" fill="#f4f4f4"/>
 <rect x="964" y="94" width="3.2" height="9.2" fill="#ececec"/>
 <path d="M948.1 89.8H950.8M954 80.9H957M961.2 94H964"/>
</g>
<!-- combo -->
<g stroke="#a6a6a6" stroke-width="1.2">
 <rect x="944.6" y="127.6" width="7.6" height="14.6" fill="#dcdcdc"/>
 <rect x="952.2" y="132.4" width="7.6" height="9.8" fill="#f1f1f1"/>
 <rect x="959.8" y="136.6" width="7.6" height="5.6" fill="#dcdcdc"/>
</g>
<path d="M947.6 120.6L956.6 125.4L964.6 130.2" stroke="#fff" stroke-width="3.6"/>
<path d="M947.6 120.6L956.6 125.4L964.6 130.2" stroke="#8f8f8f" stroke-width="1.2"/>
<g fill="#8f8f8f"><rect x="945.8" y="119" width="3.4" height="3.4"/><rect x="954.8" y="123.7" width="3.4" height="3.4"/><rect x="962.8" y="128.5" width="3.4" height="3.4"/></g>
<!-- Mapas globe -->
<path d="M1031.8 80A19 19 0 1 0 1047.6 111.6" stroke="#a3a3a3" stroke-width="1.3"/>
<circle cx="1033.5" cy="98.9" r="14.2" fill="#efefef" stroke="#a3a3a3" stroke-width="1.3"/>
<path d="M1036 88.5l2.5-2 5 2.8 3 4.8-.4 4.2-3.2 1.2-3.6-1.4-2.6-3.4.8-3.4zM1020.2 97.2l3.2-3 5-.8 1.2 2-2.8 1.8-.6 3.2 3.4 1.6-1 2.2-4.4.4-3.6-3.4zM1030.6 104.6l4.6-1.8 5.4.6 2 2.4-2.2 4-4.4 1.8-3.2-1.6-2.6-2.8zM1031.8 86.8l2-1 .6 1.4-1.8 1z" fill="#a3a3a3"/>
<path d="M1033 117.4V121.8M1020.2 121.8H1045.8" stroke="#a3a3a3" stroke-width="1.3"/>
<!-- Grafico Dinamico -->
<g transform="translate(1094.4 81.4)">
 <rect x="0.6" y="0.6" width="40.6" height="40.6" fill="#f3f3f3" stroke="#a3a3a3" stroke-width="1.3"/>
 <rect x="5.3" y="5.3" width="7.4" height="7.4" fill="#dbdbdb" stroke="#aaaaaa" stroke-width="1.15"/>
 <rect x="17.1" y="5.3" width="19.8" height="7.4" fill="#dbdbdb" stroke="#aaaaaa" stroke-width="1.15"/>
 <rect x="5.3" y="17.6" width="7.4" height="19.3" fill="#dbdbdb" stroke="#aaaaaa" stroke-width="1.15"/>
</g>
<rect x="1113.6" y="101" width="27" height="26" fill="#fff" opacity="0"/>
<g stroke="#a6a6a6" stroke-width="1.2">
 <rect x="1115.8" y="113.4" width="7.8" height="11.6" fill="#dcdcdc"/>
 <rect x="1123.6" y="102.8" width="7.6" height="22.2" fill="#f1f1f1"/>
 <rect x="1131.2" y="107.6" width="7.4" height="17.4" fill="#dcdcdc"/>
</g>
<!-- dialog launcher -->
<path d="M1160 198.6H1169.4V208M1163.2 201.8L1169 207.6M1169.2 203.4V207.8H1164.8" stroke="#b0b0b0" stroke-width="1.1"/>
<!-- sparklines -->
<g stroke="#a3a3a3" stroke-width="1.3">
 <path d="M1198.6 81.8V102.4M1195 85.4H1219M1195 98.8H1219"/>
 <path d="M1198.6 120.6V141.2M1195 124.2H1219M1195 137.6H1219"/>
 <path d="M1198.6 159.6V180.2M1195 163.2H1219M1195 176.6H1219"/>
 <path d="M1200 95L1203.6 90.6L1207.2 94.4L1210.6 89L1214 94.4L1216.4 90.8L1219 95" stroke-width="1.1"/>
 <rect x="1201.8" y="130" width="2.6" height="4.2" fill="#e6e6e6"/><rect x="1207.4" y="127.4" width="2.6" height="6.8" fill="#e6e6e6"/><rect x="1213.2" y="128.6" width="2.6" height="5.6" fill="#e6e6e6"/>
 <rect x="1201.8" y="165.8" width="2.6" height="4.2" fill="#e6e6e6"/><rect x="1207.4" y="170" width="2.6" height="4.2" fill="#e6e6e6"/><rect x="1213.2" y="165.8" width="2.6" height="4.2" fill="#e6e6e6"/>
</g>
<!-- Filtros -->
<rect x="1388.8" y="78.8" width="40.6" height="40.3" fill="#f8f8f8" stroke="#3b3b3b" stroke-width="1.3"/>
<rect x="1389.4" y="79.4" width="39.4" height="5" fill="#c8c8c8"/>
<path d="M1388.8 84.8H1429.4" stroke="#3b3b3b" stroke-width="1.2"/>
<rect x="1394.6" y="90.3" width="28.8" height="7.8" fill="#83beec" stroke="#1e6fbf" stroke-width="1.3"/>
<rect x="1394.6" y="104.6" width="21" height="7.2" fill="#c8c8c8" stroke="#7a7a7a" stroke-width="1.2"/>
<path d="M1410.6 101.2H1432.8V103.4L1425.4 111V122.2H1418.6V111L1410.6 103.4Z" fill="#fafafa" stroke="#fff" stroke-width="4"/>
<path d="M1410.6 101.2H1432.8V103.4L1425.4 111V122.2H1418.6V111L1410.6 103.4Z" fill="#fafafa" stroke="#3b3b3b" stroke-width="1.3"/>
<!-- Link -->
<rect x="1483" y="97.8" width="30.2" height="18.2" rx="9.1" stroke="#a3a3a3" stroke-width="1.5"/>
<circle cx="1502.7" cy="97.9" r="2.9" fill="#fff"/>
<rect x="1472.9" y="87.6" width="30" height="18.2" rx="9.1" stroke="#a3a3a3" stroke-width="1.5"/>
<circle cx="1483.1" cy="105.8" r="2.9" fill="#fff"/>
<path d="M1483.3 109.3A9.1 9.1 0 0 1 1484.2 102.4" stroke="#a3a3a3" stroke-width="1.5"/>
<!-- Comentario -->
<path d="M1577.9 83.2H1618.1V109.8H1592L1581.8 120V109.8H1577.9Z" fill="#f0f0f0" stroke="#a3a3a3" stroke-width="1.5"/>
<rect x="1572" y="76" width="16.7" height="15.9" fill="#fff"/>
<path d="M1585.5 78.2V101.6M1574.2 89.3H1598" stroke="#fff" stroke-width="5.2"/>
<path d="M1585.5 78.2V100.8M1574.2 89.3H1597.1" stroke="#a6a6a6" stroke-width="1.5"/>
<!-- Texto A -->
<path d="M1684.6 104L1716 80.4L1708.6 118.4M1695.4 96.2L1712.6 103.2" stroke="#2188d6" stroke-width="3.1" stroke-linejoin="miter"/>
<!-- Comentarios button icon -->
<path d="M1682.4 38.1H1697.4V49.2H1688L1684.4 52.2V49.2H1682.4Z" stroke="#333" stroke-width="1.2" stroke-linejoin="round"/>
<!-- share icon -->
<path d="M1846.4 43.6H1844.2V52.8H1858.4V48.6" stroke="#fff" stroke-width="1.4" stroke-linejoin="round"/>
<path d="M1847.2 49.6C1847.6 44.4 1850.6 41.4 1854.6 41.2V37.6L1860.2 42.8L1854.6 48V44.4C1851.2 44.4 1848.8 46.2 1847.2 49.6Z" stroke="#fff" stroke-width="1.3" stroke-linejoin="round"/>
<path d="M1875 43.4L1879.2 47.4L1883.4 43.4" stroke="#fff" stroke-width="1.6"/>
<!-- chevrons disabled -->
<g stroke="#b2b2b2" stroke-width="1.45">
 <path d="M100 162.6L104.4 166.8L108.8 162.6"/>
 <path d="M381 162.6L385.3 166.8L389.6 162.6"/>
 <path d="M1026.8 162.6L1031.1 166.8L1035.4 162.6"/>
 <path d="M1149.8 164.4L1154.1 168.6L1158.4 164.4"/>
 <path d="M1488.2 162.2L1492.4 166.4L1496.6 162.2"/>
</g>
<g stroke="#b6b6b6" stroke-width="1.25">
 <path d="M851.4 90.5L855.4 94.3L859.4 90.5M851.4 129.5L855.4 133.3L859.4 129.5M851.4 168.5L855.4 172.3L859.4 168.5"/>
 <path d="M914.5 90.5L918.5 94.3L922.5 90.5M914.5 129.5L918.5 133.3L922.5 129.5M914.5 168.5L918.5 172.3L922.5 168.5"/>
 <path d="M977.3 90.5L981.3 94.3L985.3 90.5M977.3 129.5L981.3 133.3L985.3 129.5"/>
</g>
<!-- chevrons enabled -->
<g stroke="#222" stroke-width="1.6">
 <path d="M498 159.2L502.2 163.3L506.4 159.2"/>
 <path d="M1404 159.6L1408.3 163.7L1412.6 159.6"/>
 <path d="M1694.8 159.2L1699 163.3L1703.2 159.2"/>
 <path d="M1785.8 159.2L1790 163.3L1794.2 159.2"/>
 <path d="M1867.2 194.4L1874 200.8L1880.8 194.4"/>
</g>
</svg>
<!-- Omega -->
<span class="t" style="left:1769.6px;top:71.2px;font-family:'DejaVu Sans Light','DejaVu Sans',sans-serif;font-weight:200;font-size:47px;line-height:58px;color:#2b2b2b;transform:scaleX(1.14)">Ω</span>
<!-- formula bar icons -->
<svg class="a" style="left:0;top:228px" width="1900" height="40" viewBox="0 228 1900 40" fill="none">
<path d="M1875.2 242.6L1882 249.6L1888.8 242.6" stroke="#8a8a8a" stroke-width="1.4"/>
<path d="M129 245.6L135.6 252.6L142.2 245.6" stroke="#333" stroke-width="1.6"/>
<path d="M192.4 239.6L208.4 255.6M208.4 239.6L192.4 255.6" stroke="#b9b9b9" stroke-width="1.5"/>
<path d="M225.4 248.4L233.4 256L248.4 239.4" stroke="#b9b9b9" stroke-width="1.5"/>
<path d="M292.8 246L299.3 252.6L305.8 246" stroke="#a2a2a2" stroke-width="1.4"/>
</svg>
<span class="t" style="left:262.3px;top:233px;font-family:'Liberation Serif',serif;font-style:italic;font-size:25.5px;line-height:28px;color:#333;letter-spacing:-0.5px;-webkit-text-stroke:0.3px #333;transform:scaleX(1.2)">fx</span>
<!-- tab bar icons -->
<svg class="a" style="left:0;top:880px" width="1900" height="48" viewBox="0 880 1900 48" fill="none">
<path d="M31.4 894.6L24 901.3L31.4 908" stroke="#444" stroke-width="1.5"/>
<path d="M72.6 894.6L80 901.3L72.6 908" stroke="#444" stroke-width="1.5"/>
<g fill="#444"><circle cx="117.4" cy="900.8" r="2"/><circle cx="123" cy="900.8" r="2"/><circle cx="128.6" cy="900.8" r="2"/>
<circle cx="1228.6" cy="900.8" r="2"/><circle cx="1234.3" cy="900.8" r="2"/><circle cx="1240" cy="900.8" r="2"/>
<rect x="1329" y="895.6" width="3" height="3"/><rect x="1329" y="900.8" width="3" height="3"/><rect x="1329" y="906" width="3" height="3"/></g>
<path d="M1274.5 900.8H1290.5M1282.5 892.8V908.8" stroke="#444" stroke-width="1.4"/>
<path d="M1372.5 894.4V908L1362.6 901.2Z" fill="#6e6e6e"/>
<path d="M1862 894.4V908L1871.9 901.2Z" fill="#6e6e6e"/>
</svg>
<svg class="a" style="left:1880px;top:280px" width="20" height="600" viewBox="1880 280 20 600"><path d="M1886.4 293.4H1900L1893.2 284.2Z" fill="#6e6e6e"/><path d="M1886.4 863.4H1900L1893.2 872.6Z" fill="#6e6e6e"/></svg>


<!-- dialog -->
<div class="a" style="left:658px;top:278.4px;width:595.4px;height:389.6px;background:#f0f0f0;border:1px solid #9c9c9c;border-radius:11px;box-sizing:border-box;box-shadow:0 24px 48px rgba(0,0,0,.40),0 4px 14px rgba(0,0,0,.20),0 0 1px rgba(0,0,0,.4);overflow:hidden">
  <div class="a" style="left:0;top:0;width:595px;height:43.5px;background:#f3f3f3"></div>
</div>
<div class="dline" style="left:943px;top:344px;width:300px"></div>
<div class="dline" style="left:1030px;top:418px;width:213px"></div>
<div class="dline" style="left:951px;top:559px;width:292px"></div>
<div class="inp" style="left:813px;top:366px;width:430px;height:28.5px"></div>
<div class="ibtn" style="left:1214.5px;top:367.5px;width:27.5px;height:26px"></div>
<div class="inp" style="left:737px;top:507px;width:506px;height:28.5px"></div>
<div class="ibtn" style="left:1214.5px;top:508.5px;width:27.5px;height:26px"></div>
<svg class="a" style="left:1219px;top:371px" width="18" height="18" viewBox="0 0 18 18"><path d="M9 1.2 L3.2 7.6 H7.2 V12.6 H10.8 V7.6 H14.8 Z" fill="#111"/><rect x="2.6" y="15" width="12.8" height="1.6" fill="#111"/></svg>
<svg class="a" style="left:1219px;top:512px" width="18" height="18" viewBox="0 0 18 18"><path d="M9 1.2 L3.2 7.6 H7.2 V12.6 H10.8 V7.6 H14.8 Z" fill="#111"/><rect x="2.6" y="15" width="12.8" height="1.6" fill="#111"/></svg>
<!-- radios -->
<div class="a" style="left:682px;top:445.8px;width:20px;height:20px;border-radius:50%;background:#005fb8;"></div>
<div class="a" style="left:687.5px;top:451.3px;width:9px;height:9px;border-radius:50%;background:#fff;"></div>
<div class="a" style="left:682px;top:476.8px;width:20px;height:20px;border-radius:50%;background:#fbfbfb;border:1px solid #6c6c6c;box-sizing:border-box"></div>
<!-- checkbox -->
<div class="a" style="left:682px;top:582.3px;width:20px;height:20px;border-radius:4px;background:#005fb8;"></div>
<svg class="a" style="left:682px;top:582.3px" width="20" height="20" viewBox="0 0 20 20"><path d="M5.2 10.4 L8.4 13.6 L14.8 6.8" fill="none" stroke="#fff" stroke-width="1.3" stroke-linecap="round" stroke-linejoin="round"/></svg>
<!-- buttons -->
<div class="btn" style="left:1004.4px;top:621px;width:110.2px;height:33.6px"></div>
<div class="btn" style="left:1131.4px;top:621px;width:110.2px;height:33.6px"></div>
<!-- ? and X -->
<span class="t" style="left:1143px;top:290.5px;font-size:19px;line-height:20px;color:#8a8a8a">?</span>
<svg class="a" style="left:1209px;top:292.5px" width="17" height="17" viewBox="0 0 17 17"><path d="M1 1L16 16M16 1L1 16" stroke="#6f6f6f" stroke-width="1.2" fill="none"/></svg>
<!-- resize grip -->
<svg class="a" style="left:1236px;top:652px" width="16" height="16" viewBox="1236 652 16 16" fill="#b7b7b7"><rect x="1247.2" y="654.4" width="2.6" height="2.6"/><rect x="1243.1" y="658.4" width="2.6" height="2.6"/><rect x="1247.2" y="658.4" width="2.6" height="2.6"/><rect x="1239.1" y="662.4" width="2.6" height="2.6"/><rect x="1243.1" y="662.4" width="2.6" height="2.6"/><rect x="1247.2" y="662.4" width="2.6" height="2.6"/></svg>


<span class="t" style="left:671.30px;top:292.57px;font-size:17.4px;line-height:17.4px;color:#929292;transform:scaleX(1.0257);">Tabela Dinâmica da tabela ou intervalo</span>
<span class="t" style="left:668.89px;top:338.23px;font-size:15.2px;line-height:15.2px;color:#1a1a1a;transform:scaleX(1.0341);">Selecionar uma tabela ou um intervalo</span>
<span class="t" style="left:682.89px;top:374.43px;font-size:15.2px;line-height:15.2px;color:#1a1a1a;transform:scaleX(1.0427);"><u>T</u>abela/Intervalo:</span>
<span class="t" style="left:817.39px;top:374.43px;font-size:15.2px;line-height:15.2px;color:#1a1a1a;transform:scaleX(0.9697);">TB_Vendas_Hist</span>
<span class="t" style="left:668.89px;top:411.93px;font-size:15.2px;line-height:15.2px;color:#1a1a1a;transform:scaleX(1.0024);">Escolha onde você deseja colocar a tabela dinâmica</span>
<span class="t" style="left:712.09px;top:450.43px;font-size:15.2px;line-height:15.2px;color:#1a1a1a;transform:scaleX(1.0266);"><u>N</u>ova Planilha</span>
<span class="t" style="left:712.09px;top:481.43px;font-size:15.2px;line-height:15.2px;color:#1a1a1a;transform:scaleX(0.9989);"><u>P</u>lanilha Existente</span>
<span class="t" style="left:682.89px;top:515.43px;font-size:15.2px;line-height:15.2px;color:#8a8a8a;transform:scaleX(1.0017);"><u>L</u>ocal:</span>
<span class="t" style="left:668.89px;top:552.23px;font-size:15.2px;line-height:15.2px;color:#1a1a1a;transform:scaleX(0.9896);">Escolha se deseja analisar várias tabelas</span>
<span class="t" style="left:712.09px;top:586.13px;font-size:15.2px;line-height:15.2px;color:#1a1a1a;transform:scaleX(1.0156);">Adicionar estes dados ao Modelo de <u>D</u>ados</span>
<span class="t" style="left:1049.49px;top:631.23px;font-size:15.2px;line-height:15.2px;color:#1a1a1a;transform:scaleX(0.9664);">OK</span>
<span class="t" style="left:1156.19px;top:631.23px;font-size:15.2px;line-height:15.2px;color:#1a1a1a;transform:scaleX(0.9923);">Cancelar</span>

<svg class="a" style="left:0;top:0" width="1900" height="928" viewBox="0 0 1900 928" fill="none" stroke="#e5191c" stroke-linecap="round" stroke-linejoin="round">
<path d="M298.7 2.0C298.7 6.7 299.0 21.7 298.8 30.0C298.6 38.3 298.0 46.0 297.5 52.0C297.0 58.0 296.7 62.2 296.0 66.0C295.3 69.8 295.0 73.4 293.2 74.8C291.4 76.2 289.5 74.4 285.0 74.2C280.5 74.0 273.5 73.6 266.0 73.6C258.5 73.5 245.9 74.0 240.0 73.9C234.1 73.8 232.7 73.9 230.5 73.2C228.3 72.5 227.7 72.5 227.0 70.0C226.3 67.5 226.4 62.2 226.2 58.0C226.0 53.8 226.1 49.3 225.6 45.0C225.1 40.7 224.2 36.2 223.2 32.0C222.1 27.8 220.2 23.0 219.3 20.0C218.4 17.0 217.6 15.5 217.6 14.2C217.6 12.9 216.4 12.4 219.5 12.0C222.6 11.6 228.2 11.7 236.0 11.8C243.8 11.9 257.8 12.2 266.0 12.4C274.2 12.6 279.7 12.9 285.0 13.2C290.3 13.5 295.8 13.9 298.0 14.0" stroke-width="5.6"/>
<path d="M226.3 45.3C220.4 45.3 202.0 45.3 190.9 45.3C179.8 45.3 167.5 45.2 160.0 45.3C152.5 45.3 149.9 44.9 146.0 45.6C142.1 46.4 140.7 47.6 136.6 49.8C132.5 52.0 125.8 55.0 121.5 58.8C117.2 62.6 114.4 67.4 110.9 72.4C107.4 77.4 103.1 84.2 100.3 89.0C97.5 93.8 95.3 99.0 94.3 101.0" stroke-width="5.4"/>
<path d="M83.9 92.0C83.4 93.7 82.1 98.5 81.0 102.0C79.9 105.5 78.2 110.2 77.4 113.0C76.6 115.8 76.1 117.7 76.4 118.6C76.8 119.5 75.9 119.6 79.5 118.4C83.1 117.2 91.2 113.5 98.0 111.4C104.8 109.3 116.3 106.6 120.0 105.6" stroke-width="5.6"/>
<path d="M63.8 140.8C65.5 143.0 70.7 148.3 73.9 153.9C77.1 159.5 80.0 168.2 83.0 174.3C86.0 180.4 87.8 184.9 92.0 190.2C96.2 195.5 101.5 200.9 107.9 206.0C114.3 211.1 123.0 216.0 130.5 220.7C138.0 225.4 145.5 230.0 153.1 234.3C160.7 238.6 168.2 242.8 175.8 246.7C183.4 250.6 190.9 254.4 198.4 258.0C205.9 261.6 213.4 264.8 221.0 268.2C228.6 271.6 236.1 275.0 243.7 278.4C251.2 281.8 258.8 285.4 266.3 288.6C273.8 291.8 281.3 295.0 288.9 297.6C296.4 300.2 304.1 302.4 311.6 304.4C319.2 306.4 326.7 308.1 334.2 309.6C341.7 311.1 349.3 312.3 356.8 313.5C364.3 314.7 371.8 316.0 379.4 316.9C386.9 317.8 394.6 318.2 402.1 318.7C409.7 319.1 415.1 319.7 424.7 319.6C434.3 319.5 450.1 318.4 460.0 318.2C469.9 318.0 472.8 318.4 484.2 318.5C495.6 318.6 517.4 318.9 528.4 318.5C539.4 318.1 543.1 318.0 550.5 316.3C557.9 314.6 565.2 311.3 572.6 308.5C580.0 305.7 587.3 302.3 594.7 299.7C602.1 297.1 607.6 295.4 616.8 293.0C626.0 290.6 639.0 288.2 650.0 285.3C661.0 282.4 672.1 278.2 683.1 275.4C694.1 272.6 705.2 270.1 716.3 268.7C727.4 267.3 738.5 267.2 749.5 267.0C760.5 266.8 774.9 267.1 782.6 267.6C790.3 268.1 792.8 268.5 795.9 269.8C799.0 271.1 800.1 272.4 801.4 275.4C802.7 278.3 803.2 285.5 803.6 287.5" stroke-width="4.6"/>
<path d="M784.8 284.2C786.7 286.0 792.4 291.4 796.0 295.0C799.6 298.6 804.3 304.0 806.5 306.0C808.7 308.0 808.2 307.5 809.0 307.0C809.8 306.5 809.8 306.5 811.5 303.0C813.2 299.5 816.5 291.7 819.0 286.0C821.5 280.3 825.5 271.6 826.8 268.7" stroke-width="5.0"/>
<path d="M697.2 556.5C701.4 557.2 714.3 559.1 722.6 560.6C730.9 562.1 734.7 564.3 746.8 565.4C758.9 566.5 779.1 566.7 795.3 567.1C811.4 567.5 827.6 567.7 843.7 567.8C859.8 567.9 876.0 567.6 892.1 567.8C908.2 568.0 924.4 568.0 940.5 569.0C956.6 570.0 975.2 571.9 988.9 573.9C1002.6 575.9 1015.1 578.8 1022.8 581.2C1030.5 583.6 1032.5 585.6 1034.9 588.4C1037.3 591.2 1038.2 595.1 1037.4 598.1C1036.6 601.1 1038.2 604.4 1030.1 606.6C1022.0 608.8 1007.9 610.4 988.9 611.4C969.9 612.4 936.5 612.0 916.3 612.6C896.1 613.2 888.1 614.5 867.9 615.1C847.7 615.7 819.5 616.3 795.3 616.3C771.1 616.3 740.8 615.9 722.6 615.1C704.4 614.3 694.8 613.0 686.3 611.4C677.8 609.8 674.6 609.2 671.8 605.4C669.0 601.6 669.6 594.0 669.4 588.4C669.2 582.8 669.4 575.2 670.6 571.5C671.8 567.8 672.8 567.3 676.6 566.1C680.4 564.9 687.8 564.5 693.6 564.2C699.5 563.9 708.7 564.2 711.7 564.2" stroke-width="5.2"/>
<path d="M1035.0 584.8C1037.4 584.5 1045.1 583.5 1049.5 583.1C1053.9 582.7 1058.4 581.7 1061.6 582.4C1064.8 583.1 1066.4 584.2 1068.8 587.2C1071.2 590.2 1074.3 596.7 1076.1 600.5C1077.9 604.3 1079.1 608.6 1079.7 610.2" stroke-width="5.0"/>
<path d="M1061.6 602.5C1063.3 603.4 1068.9 606.4 1072.0 608.0C1075.1 609.6 1078.2 612.2 1080.0 612.4C1081.8 612.6 1081.7 611.7 1082.6 609.0C1083.5 606.3 1084.6 600.4 1085.4 596.0C1086.2 591.6 1087.3 584.7 1087.7 582.4" stroke-width="5.0"/>
</svg>
</div>
</body>
</html>
